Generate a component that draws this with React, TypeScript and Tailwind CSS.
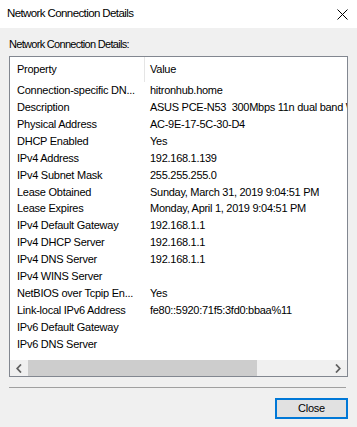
import React from 'react';

const ROWS: [string, string][] = [
    ['Connection-specific DN...', 'hitronhub.home'],
    ['Description', 'ASUS PCE-N53  300Mbps 11n dual band Wireless Network Adapter'],
    ['Physical Address', 'AC-9E-17-5C-30-D4'],
    ['DHCP Enabled', 'Yes'],
    ['IPv4 Address', '192.168.1.139'],
    ['IPv4 Subnet Mask', '255.255.255.0'],
    ['Lease Obtained', 'Sunday, March 31, 2019 9:04:51 PM'],
    ['Lease Expires', 'Monday, April 1, 2019 9:04:51 PM'],
    ['IPv4 Default Gateway', '192.168.1.1'],
    ['IPv4 DHCP Server', '192.168.1.1'],
    ['IPv4 DNS Server', '192.168.1.1'],
    ['IPv4 WINS Server', ''],
    ['NetBIOS over Tcpip En...', 'Yes'],
    ['Link-local IPv6 Address', 'fe80::5920:71f5:3fd0:bbaa%11'],
    ['IPv6 Default Gateway', ''],
    ['IPv6 DNS Server', ''],
];

const App: React.FC = () => {
    return (
        <div className="w-[357px] h-[427px] bg-[#f0f0f0] flex flex-col text-[11px] tracking-[-0.25px] text-black font-['Liberation_Sans',Arial,sans-serif] overflow-hidden">
            {/* title bar */}
            <div className="h-[28px] bg-white flex items-center justify-between pl-[7px] pr-[9px] shrink-0">
                <span className="leading-none text-[11.5px] tracking-[-0.6px]">Network Connection Details</span>
                <svg width="11" height="11" viewBox="0 0 11 11" className="mt-[1px]">
                    <path d="M0.5 0.5 L10.5 10.5 M10.5 0.5 L0.5 10.5" stroke="#000" strokeWidth="1" />
                </svg>
            </div>

            <div className="flex-1 flex flex-col pl-[9px] pr-[9px]">
                <div className="h-[28px] flex items-end pb-[6px] leading-none tracking-[-0.7px]">Network Connection Details:</div>

                {/* list view */}
                <div className="h-[321px] border border-[#828790] bg-white flex flex-col">
                    <div className="flex-1 overflow-hidden">
                        <div className="h-[25px] flex items-center">
                            <div className="w-[135px] h-full pl-[7px] flex items-center border-r border-[#e5e5e5]">Property</div>
                            <div className="pl-[5px]">Value</div>
                        </div>
                        {ROWS.map(([k, v], i) => (
                            <div key={i} className="h-[16.9px] flex items-center whitespace-pre">
                                <div className="w-[135px] shrink-0 pl-[7px] overflow-hidden">{k}</div>
                                <div className="pl-[5px] tracking-[-0.28px]">{v}</div>
                            </div>
                        ))}
                    </div>
                    {/* horizontal scrollbar */}
                    <div className="h-[16px] bg-[#f0f0f0] flex items-center shrink-0">
                        <div className="w-[18px] h-full flex items-center justify-center">
                            <svg width="6" height="9" viewBox="0 0 6 9">
                                <path d="M5 0.5 L1.2 4.5 L5 8.5" fill="none" stroke="#606060" strokeWidth="1.8" />
                            </svg>
                        </div>
                        <div className="w-[229px] h-full bg-[#cdcdcd]" />
                        <div className="flex-1" />
                        <div className="w-[18px] h-full flex items-center justify-center">
                            <svg width="6" height="9" viewBox="0 0 6 9">
                                <path d="M1 0.5 L4.8 4.5 L1 8.5" fill="none" stroke="#606060" strokeWidth="1.8" />
                            </svg>
                        </div>
                    </div>
                </div>

                <div className="mt-[10px] h-px bg-[#a0a0a0] mr-[2px]" />

                <div className="flex justify-end mt-[10px]">
                    <button className="w-[73px] h-[21px] border-2 border-[#0078d7] bg-[#e1e1e1] flex items-center justify-center leading-none">
                        Close
                    </button>
                </div>
            </div>
        </div>
    );
};

export default App;
